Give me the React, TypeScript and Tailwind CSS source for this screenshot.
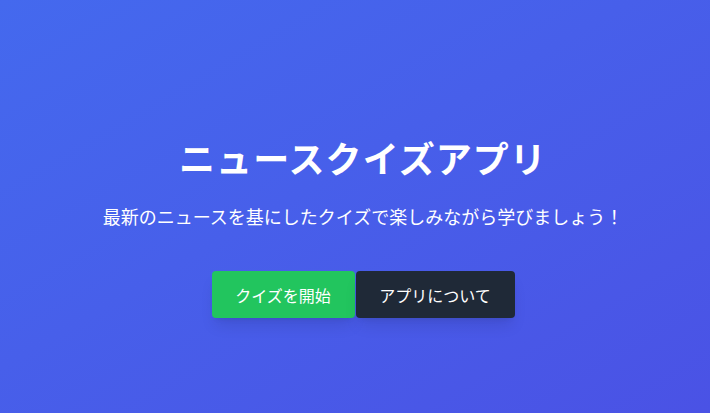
export default function App() {
  return (
    <div
      className="min-h-screen w-full bg-gradient-to-br from-[#4469ee] to-[#4a52e5] flex flex-col items-center pt-[137px] pl-4 text-white"
      style={{ fontFamily: '"Noto Sans CJK JP", "Noto Sans", sans-serif' }}
    >
      <h1 className="text-4xl leading-[40px] font-bold tracking-[0.03em]">ニュースクイズアプリ</h1>
      <p className="mt-[25px] text-lg leading-7">最新のニュースを基にしたクイズで楽しみながら学びましょう！</p>
      <div className="mt-[41px] flex gap-px">
        <button className="w-[143px] h-[47px] bg-[#22c55e] rounded text-base shadow-lg text-white">クイズを開始</button>
        <button className="w-[159px] h-[47px] bg-[#1f2937] rounded text-base shadow-lg text-white">アプリについて</button>
      </div>
    </div>
  );
}
